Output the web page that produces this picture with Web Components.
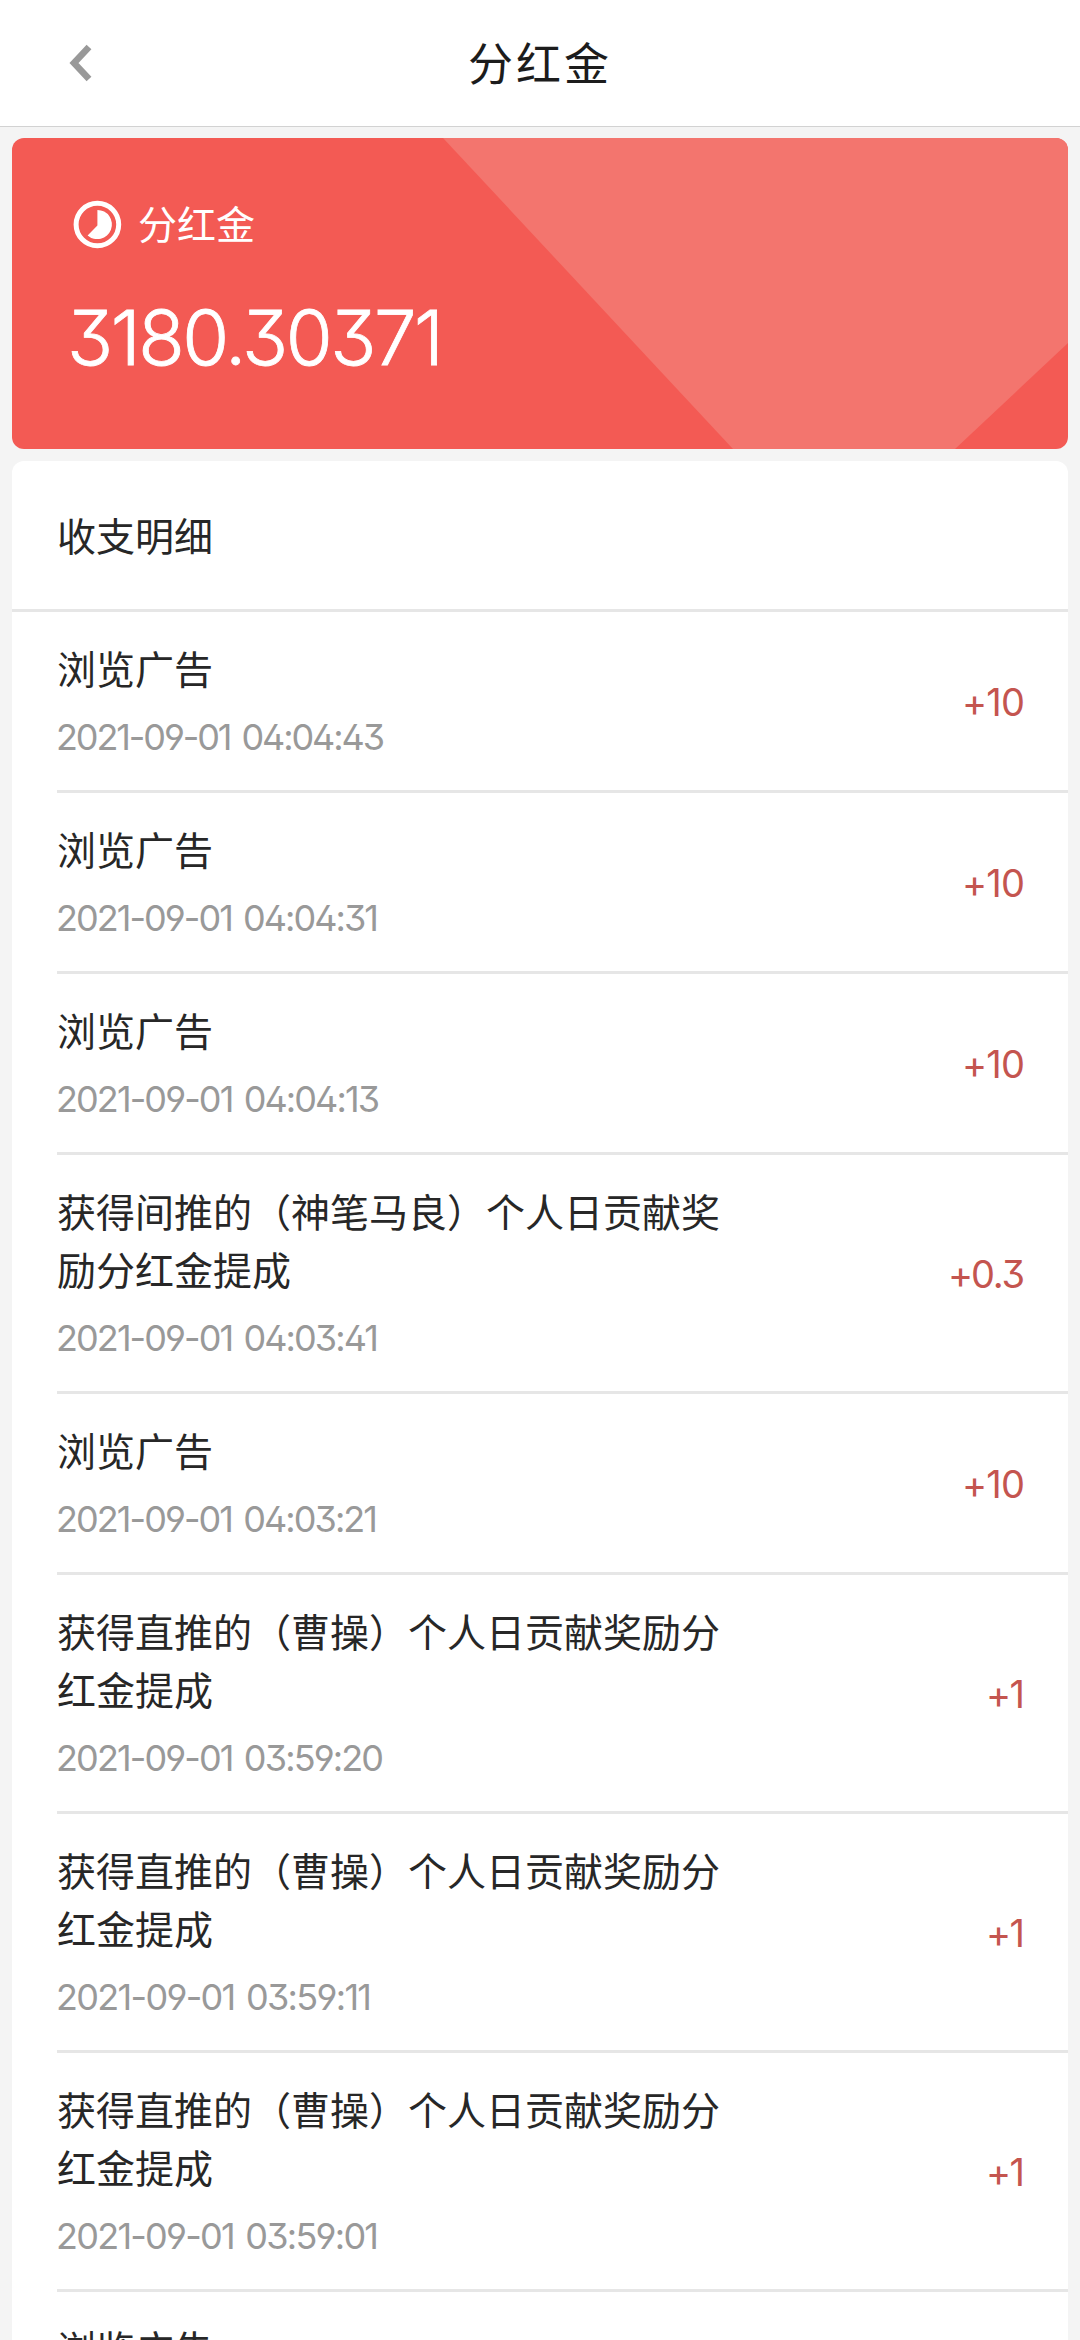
<!DOCTYPE html>
<html lang="zh-CN">
<head>
<meta charset="utf-8">
<title>分红金</title>
<style>
  html, body { margin: 0; }
  body {
    height: 2340px;
    overflow: hidden;
    background: #f4f4f4;
    font-family: Inter, "Noto Sans CJK SC", sans-serif;
    font-feature-settings: "cv09", "ss01";
    color: #272727;
  }
</style>
</head>
<body>
<bonus-page>
  <nav-bar slot="nav">分红金</nav-bar>
  <balance-card slot="card" label="分红金">3180.30371</balance-card>
  <record-list slot="list" heading="收支明细">
    <record-item time="2021-09-01 04:04:43" w="329" amount="+10" aw="63">浏览广告</record-item>
    <record-item time="2021-09-01 04:04:31" w="323" amount="+10" aw="63">浏览广告</record-item>
    <record-item time="2021-09-01 04:04:13" w="324" amount="+10" aw="63">浏览广告</record-item>
    <record-item time="2021-09-01 04:03:41" w="323" amount="+0.3" aw="77">获得间推的（神笔马良）个人日贡献奖励分红金提成</record-item>
    <record-item time="2021-09-01 04:03:21" w="322" amount="+10" aw="63">浏览广告</record-item>
    <record-item time="2021-09-01 03:59:20" w="328" amount="+1" aw="39">获得直推的（曹操）个人日贡献奖励分红金提成</record-item>
    <record-item time="2021-09-01 03:59:11" w="316" amount="+1" aw="39">获得直推的（曹操）个人日贡献奖励分红金提成</record-item>
    <record-item time="2021-09-01 03:59:01" w="323" amount="+1" aw="39">获得直推的（曹操）个人日贡献奖励分红金提成</record-item>
    <record-item time="" w="319" amount="" aw="58">浏览广告</record-item>
  </record-list>
</bonus-page>
<script>
function define(name, html, ready) {
  customElements.define(name, class extends HTMLElement {
    connectedCallback() {
      if (this.shadowRoot) return;
      this.attachShadow({ mode: 'open' }).innerHTML = html;
      if (ready) ready(this, this.shadowRoot);
    }
  });
}

// A run of digits tracked so that it spans exactly `w` pixels.
define('fit-text', `
  <style>:host{display:block;white-space:nowrap} span{display:inline-block}</style>
  <span></span>`, (el, root) => {
  const span = root.querySelector('span');
  const text = el.getAttribute('text');
  if (!text) return;
  span.textContent = text;
  const gap = (Number(el.getAttribute('w')) - span.getBoundingClientRect().width) / (text.length - 1);
  span.style.letterSpacing = gap + 'px';
  span.style.marginRight = -gap + 'px';
});

define('bonus-page', `
  <style>
    :host{display:flex;flex-direction:column;height:2340px;overflow:hidden}
    main{display:flex;flex-direction:column;gap:12px;padding:11px 12px 0}
  </style>
  <slot name="nav"></slot>
  <main><slot name="card"></slot><slot name="list"></slot></main>`);

define('nav-bar', `
  <style>
    :host{flex:none;display:grid;grid-template-columns:160px 1fr 160px;align-items:center;height:126px;
      background:#fff;border-bottom:1px solid #d2d2d2;color:#1c1c1c}
    svg{display:block;margin-left:60px}
    h1{margin:0;padding-top:4px;font-size:45px;font-weight:400;letter-spacing:3px;line-height:64px;text-align:center}
  </style>
  <svg width="40" height="40" viewBox="0 0 40 40" fill="none" stroke="#999" stroke-width="6.6"><path d="M29 4 14 20l15 16"/></svg>
  <h1><slot></slot></h1>`);

define('balance-card', `
  <style>
    :host{flex:none;display:grid;height:311px;border-radius:12px;overflow:hidden;background:#f35a54;color:#fff}
    .art,.body{grid-area:1/1}
    .body{display:flex;flex-direction:column;padding:57px 0 0 58px}
    .label{display:flex;align-items:center;gap:14px;height:60px;font-size:39px;line-height:60px}
    fit-text{margin:32px 0 0 -3px;font-size:76px;line-height:100px;font-weight:300;-webkit-text-stroke:.8px #fff}
    slot{display:none}
  </style>
  <svg class="art" width="1056" height="311" viewBox="0 0 1056 311"><path fill="#f3756e" d="M431 0H1056V205L943 311H721Z"/></svg>
  <div class="body">
    <div class="label">
      <svg width="54" height="54" viewBox="-27.4 -26.5 54 54"><circle r="21.3" fill="none" stroke="#fff" stroke-width="5"/><path fill="#fff" d="M0-14.6A14.6 14.6 0 1 1-9.8 10.9L0 1Z"/></svg>
      <span></span>
    </div>
  </div><slot></slot>`, (el, root) => {
  root.querySelector('span').textContent = el.getAttribute('label');
  const f = document.createElement('fit-text');
  f.setAttribute('text', el.textContent.trim());
  f.setAttribute('w', '377');
  root.querySelector('.body').append(f);
});

define('record-list', `
  <style>
    :host{flex:none;display:block;background:#fff;border-radius:12px 12px 0 0}
    h2{margin:0;padding-left:45px;height:148px;border-bottom:3px solid #e6e6e6;
      font-size:39px;font-weight:400;line-height:151px}
  </style>
  <h2></h2><slot></slot>`, (el, root) => {
  root.querySelector('h2').textContent = el.getAttribute('heading');
});

define('record-item', `
  <style>
    :host{display:flex;align-items:center;justify-content:space-between;margin-left:45px;
      padding:29px 43px 25px 0;border-bottom:3px solid #e6e6e6}
    .title{width:668px;font-size:39px;line-height:58px}
    .time{margin:12px 0 1px -1px;color:#999;font-size:36px;line-height:53px;font-weight:400;word-spacing:3px}
    .amount{margin-bottom:2px;color:#c4554f;font-size:38px;line-height:58px;font-weight:400;font-kerning:none}
  </style>
  <div class="info"><div class="title"><slot></slot></div></div>`, (el, root) => {
  const add = (parent, cls, text, w) => {
    const f = document.createElement('fit-text');
    f.className = cls;
    f.setAttribute('text', el.getAttribute(text));
    f.setAttribute('w', el.getAttribute(w));
    parent.append(f);
  };
  add(root.querySelector('.info'), 'time', 'time', 'w');
  add(root, 'amount', 'amount', 'aw');
});
</script>
</body>
</html>
